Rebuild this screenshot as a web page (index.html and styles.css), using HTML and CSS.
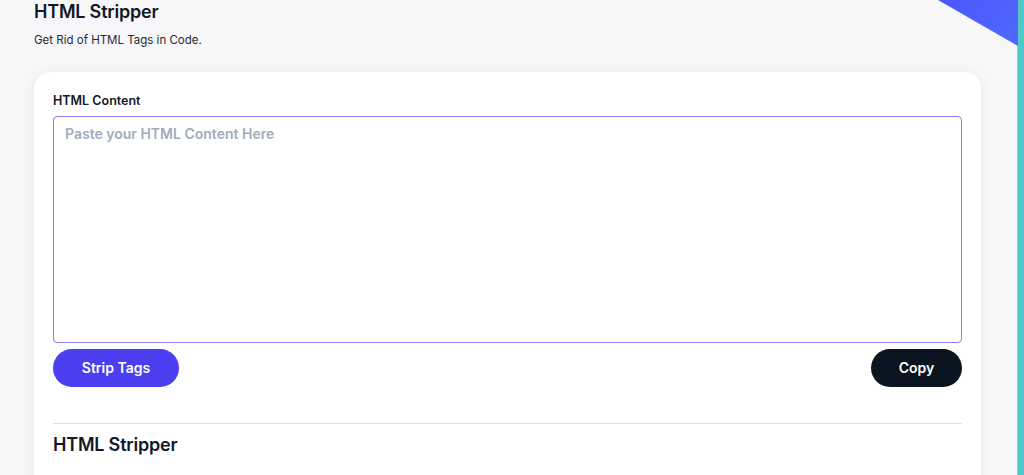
FILE: index.html
```html
<!DOCTYPE html>
<html lang="en">
<head>
<meta charset="utf-8">
<title>HTML Stripper</title>
<link rel="stylesheet" href="styles.css">
</head>
<body>
<div class="page">
  <main class="main">
    <header class="head">
      <h1 class="title">HTML Stripper</h1>
      <p class="subtitle">Get Rid of HTML Tags in Code.</p>
    </header>
    <section class="card">
      <label class="label" for="src">HTML Content</label>
      <textarea id="src" class="input" placeholder="Paste your HTML Content Here"></textarea>
      <div class="actions">
        <button class="btn btn-primary">Strip Tags</button>
        <button class="btn btn-dark">Copy</button>
      </div>
      <hr class="divider">
      <h2 class="section-title">HTML Stripper</h2>
    </section>
  </main>
  <div class="strip"></div>
  <div class="corner"></div>
</div>
</body>
</html>
```
FILE: styles.css
```css
* { box-sizing: border-box; }
html, body { margin: 0; padding: 0; height: 100%; overflow: hidden; }
body {
  background: #f7f7fa;
  font-family: Inter, "Noto Sans", Roboto, sans-serif;
  color: #111827;
}
.page {
  display: flex;
  height: 475px;
  position: relative;
}
.main {
  flex: 1;
  padding: 0 37px 0 34px;
}
.head { padding-top: 0; }
.title {
  margin: 0;
  font-size: 18px;
  font-weight: 600;
  line-height: 24px;
  color: #111827;
  letter-spacing: -0.2px;
}
.subtitle {
  margin: 8px 0 0;
  font-size: 11.5px;
  line-height: 16px;
  color: #1f2937;
}
.card {
  margin-top: 24px;
  background: #fff;
  border-radius: 16px;
  padding: 20px 19px 0;
  box-shadow: 0 2px 12px rgba(0,0,0,0.07);
  height: 420px;
}
.label {
  display: block;
  font-size: 12.5px;
  font-weight: 600;
  line-height: 17px;
  color: #111827;
  margin-bottom: 7px;
}
.input {
  display: block;
  width: 100%;
  height: 227px;
  border: 1px solid #8b7ef2;
  border-radius: 4px;
  padding: 8px 11px;
  font-family: inherit;
  font-size: 14px;
  font-weight: 600;
  resize: none;
  outline: none;
}
.input::placeholder { color: #a3abbd; }
.actions {
  display: flex;
  justify-content: space-between;
  margin-top: 6px;
}
.btn {
  height: 38px;
  border: none;
  border-radius: 19px;
  color: #fff;
  font-family: inherit;
  font-size: 14px;
  font-weight: 600;
  padding: 0 0 2px;
  cursor: pointer;
}
.btn-primary { width: 126px; background: #4b3ef0; }
.btn-dark { width: 91px; background: #0b1521; }
.divider {
  margin: 36px 0 0;
  border: none;
  border-top: 1px solid #dfdfe2;
}
.section-title {
  margin: 10px 0 0;
  font-size: 18px;
  font-weight: 600;
  line-height: 22px;
  color: #111827;
  letter-spacing: -0.2px;
}
.strip {
  width: 6px;
  background: #4fc9c8;
  box-shadow: -1px 0 0 #7fd8d6;
}
.corner {
  position: absolute;
  top: 0;
  right: 6px;
  width: 80px;
  height: 46px;
  background: linear-gradient(135deg, #4b57ff, #5068fb);
  clip-path: polygon(0 0, 100% 0, 100% 100%);
}
```
